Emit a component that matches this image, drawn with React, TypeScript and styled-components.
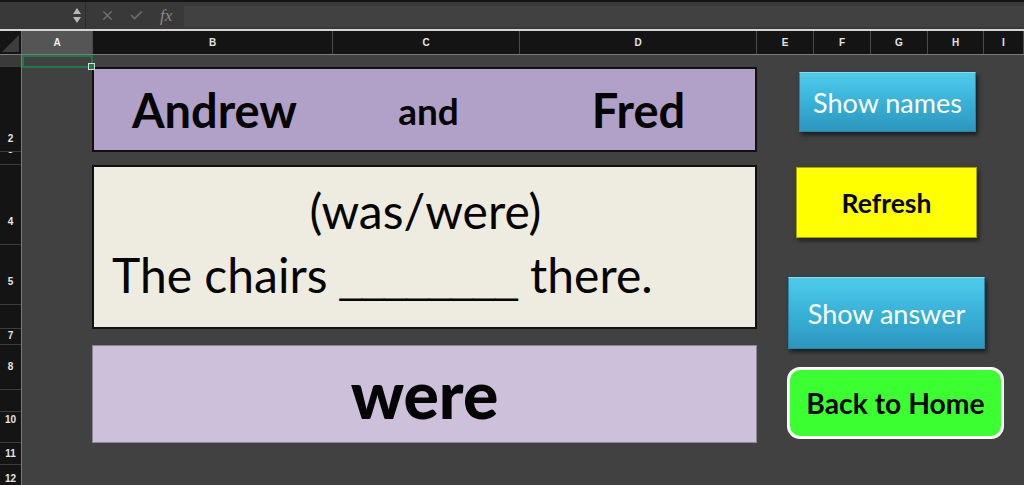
import styled, { createGlobalStyle } from 'styled-components';
import { X, Check } from 'lucide-react';

const GlobalStyle = createGlobalStyle`
  html, body {
    margin: 0;
    padding: 0;
    background: #414141;
    overflow: hidden;
  }
  * {
    box-sizing: border-box;
  }
`;

const Window = styled.div`
  width: 1024px;
  height: 485px;
  display: flex;
  flex-direction: column;
  background: #414141;
  font-family: Lato, 'Open Sans', sans-serif;
`;

// formula bar
const FormulaBar = styled.div`
  height: 31px;
  display: flex;
  align-items: stretch;
  background: #393939;
  border-top: 2px solid #151515;
  border-bottom: 2px solid #d4d4d4;
`;

const NameBox = styled.div`
  width: 86px;
  display: flex;
  align-items: center;
  justify-content: flex-end;
  padding-right: 4px;
  border-right: 1px solid #2c2c2c;
`;

const Stepper = styled.div`
  display: flex;
  flex-direction: column;
  gap: 3px;
`;

const Arrow = styled.div<{ $down?: boolean }>`
  width: 0;
  height: 0;
  border-left: 4px solid transparent;
  border-right: 4px solid transparent;
  ${p => (p.$down ? 'border-top: 6px solid #b8b8b8;' : 'border-bottom: 6px solid #b8b8b8;')}
`;

const FxIcons = styled.div`
  width: 98px;
  display: flex;
  align-items: center;
  gap: 14px;
  padding-left: 14px;
  color: #6c6c6c;
`;

const FxLabel = styled.span`
  font-family: 'Liberation Serif', serif;
  font-style: italic;
  font-size: 17px;
  color: #8a8a8a;
  margin-left: 2px;
`;

const FormulaInput = styled.div`
  flex: 1;
  margin: 4px 0 2px;
  background: #414141;
`;

// column headers
const ColumnHeaders = styled.div`
  height: 24px;
  display: flex;
  background: #141414;
  border-bottom: 1px solid #7a7a7a;
`;

const Corner = styled.div`
  width: 22px;
  border-right: 1px solid #6a6a6a;
  display: flex;
  align-items: flex-end;
  justify-content: flex-end;
  padding: 0 2px 2px 0;
`;

const HeaderCell = styled.div<{ $w?: number; $active?: boolean }>`
  ${p => (p.$w ? `width: ${p.$w}px;` : 'flex: 1;')}
  display: flex;
  align-items: center;
  justify-content: center;
  font-family: 'Liberation Sans', Arial, sans-serif;
  font-size: 10px;
  font-weight: 700;
  color: ${p => (p.$active ? '#f0f0f0' : '#e4e4e4')};
  background: ${p => (p.$active ? '#555555' : 'transparent')};
  border-right: 1px solid #4a4a4a;
`;

// body
const Body = styled.div`
  flex: 1;
  display: flex;
  min-height: 0;
`;

const RowHeaders = styled.div`
  width: 22px;
  display: flex;
  flex-direction: column;
  background: #141414;
  border-right: 1px solid #7a7a7a;
  overflow: hidden;
`;

const RowHeader = styled.div<{ $h: number; $pb: number; $active?: boolean }>`
  height: ${p => p.$h}px;
  flex-shrink: 0;
  display: flex;
  align-items: flex-end;
  justify-content: center;
  padding-bottom: ${p => p.$pb}px;
  overflow: hidden;
  font-family: 'Liberation Sans', Arial, sans-serif;
  font-size: 10px;
  font-weight: 700;
  line-height: 12px;
  color: #e4e4e4;
  background: ${p => (p.$active ? '#3a3a3a' : 'transparent')};
  border-bottom: 1px solid #3c3c3c;
`;

const Sheet = styled.div`
  flex: 1;
  position: relative;
  display: flex;
  padding-top: 12px;
  background: #414141;
`;

const SelectedCell = styled.div`
  position: absolute;
  left: 0;
  top: 0;
  width: 71px;
  height: 13px;
  border: 2px solid #1f7a4a;
  &::after {
    content: '';
    position: absolute;
    right: -4px;
    bottom: -4px;
    width: 5px;
    height: 5px;
    background: #1f7a4a;
    border: 1px solid #d9d9d9;
  }
`;

// worksheet content
const Panels = styled.div`
  width: 665px;
  margin-left: 70px;
  display: flex;
  flex-direction: column;
`;

const NamesBox = styled.div`
  height: 85px;
  display: grid;
  grid-template-columns: 241px 187px 1fr;
  align-items: center;
  background: #b1a0c7;
  border: 2px solid #111;
  font-weight: 700;
  color: #050505;
`;

const Name = styled.div<{ $size: number }>`
  text-align: center;
  font-size: ${p => p.$size}px;
  line-height: 1;
  padding-top: 2px;
`;

const SentenceBox = styled.div`
  height: 164px;
  margin-top: 13px;
  display: flex;
  flex-direction: column;
  background: #eeece1;
  border: 2px solid #111;
  color: #050505;
  font-size: 48px;
`;

const Choice = styled.div`
  text-align: center;
  line-height: 1;
  padding: 20px 0 0 2px;
`;

const Sentence = styled.div`
  line-height: 1;
  padding: 16px 0 0 18px;
  white-space: nowrap;
`;

const Blank = styled.span`
  font-family: 'Liberation Sans', Arial, sans-serif;
  font-size: 40px;
`;

const AnswerBox = styled.div`
  height: 98px;
  margin-top: 16px;
  display: flex;
  align-items: center;
  justify-content: center;
  background: #ccc0da;
  border: 1px solid #8d8599;
  font-size: 66px;
  font-weight: 900;
  color: #050505;
  padding-bottom: 2px;
`;

const Buttons = styled.div`
  margin-left: 30px;
  display: flex;
  flex-direction: column;
  align-items: flex-start;
`;

const ShapeButton = styled.div<{ $w: number; $h: number; $ml: number; $mt: number }>`
  width: ${p => p.$w}px;
  height: ${p => p.$h}px;
  margin-left: ${p => p.$ml}px;
  margin-top: ${p => p.$mt}px;
  display: flex;
  align-items: center;
  justify-content: center;
  white-space: nowrap;
`;

const BlueButton = styled(ShapeButton)`
  background: linear-gradient(180deg, #4fcbea 0%, #3ab4da 45%, #2c96bd 100%);
  border: 1px solid #2a86a8;
  border-top-color: #7fdcf3;
  box-shadow: 2px 3px 4px rgba(0, 0, 0, 0.55);
  color: #ffffff;
  font-size: 27px;
`;

const YellowButton = styled(ShapeButton)`
  background: #ffff00;
  border: 1px solid #a6a600;
  box-shadow: 2px 3px 4px rgba(0, 0, 0, 0.5);
  color: #050505;
  font-size: 26.5px;
  font-weight: 700;
`;

const GreenButton = styled(ShapeButton)`
  background: #3cff32;
  border: 3px solid #ffffff;
  border-radius: 13px;
  color: #050505;
  font-size: 28.3px;
  font-weight: 700;
`;

const columns = [
  { label: 'A', w: 71, active: true },
  { label: 'B', w: 240 },
  { label: 'C', w: 187 },
  { label: 'D', w: 237 },
  { label: 'E', w: 57 },
  { label: 'F', w: 57 },
  { label: 'G', w: 57 },
  { label: 'H', w: 56 },
  { label: 'I' },
];

const rows = [
  { label: '1', h: 12, pb: 9, active: true },
  { label: '2', h: 85, pb: 6 },
  { label: '3', h: 13, pb: 8 },
  { label: '4', h: 80, pb: 16 },
  { label: '5', h: 60, pb: 16 },
  { label: '6', h: 24, pb: 20 },
  { label: '7', h: 16, pb: 2 },
  { label: '8', h: 45, pb: 16 },
  { label: '9', h: 22, pb: 18 },
  { label: '10', h: 31, pb: 16 },
  { label: '11', h: 22, pb: 4 },
  { label: '12', h: 24, pb: 3 },
];

export default function App() {
  return (
    <Window>
      <GlobalStyle />
      <FormulaBar>
        <NameBox>
          <Stepper>
            <Arrow />
            <Arrow $down />
          </Stepper>
        </NameBox>
        <FxIcons>
          <X size={15} strokeWidth={2.5} />
          <Check size={15} strokeWidth={2.5} />
          <FxLabel>fx</FxLabel>
        </FxIcons>
        <FormulaInput />
      </FormulaBar>

      <ColumnHeaders>
        <Corner>
          <svg width="17" height="17" viewBox="0 0 17 17">
            <polygon points="17,0 17,17 0,17" fill="#3d3d3d" />
          </svg>
        </Corner>
        {columns.map(c => (
          <HeaderCell key={c.label} $w={c.w} $active={c.active}>
            {c.label}
          </HeaderCell>
        ))}
      </ColumnHeaders>

      <Body>
        <RowHeaders>
          {rows.map(r => (
            <RowHeader key={r.label} $h={r.h} $pb={r.pb} $active={r.active}>
              {r.label}
            </RowHeader>
          ))}
        </RowHeaders>

        <Sheet>
          <SelectedCell />
          <Panels>
            <NamesBox>
              <Name $size={47}>Andrew</Name>
              <Name $size={37}>and</Name>
              <Name $size={47}>Fred</Name>
            </NamesBox>
            <SentenceBox>
              <Choice>(was/were)</Choice>
              <Sentence>
                The chairs <Blank>________</Blank> there.
              </Sentence>
            </SentenceBox>
            <AnswerBox>were</AnswerBox>
          </Panels>

          <Buttons>
            <BlueButton $w={177} $h={60} $ml={12} $mt={5}>
              Show names
            </BlueButton>
            <YellowButton $w={181} $h={71} $ml={9} $mt={35}>
              Refresh
            </YellowButton>
            <BlueButton $w={197} $h={72} $ml={1} $mt={39}>
              Show answer
            </BlueButton>
            <GreenButton $w={217} $h={72} $ml={0} $mt={18}>
              Back to Home
            </GreenButton>
          </Buttons>
        </Sheet>
      </Body>
    </Window>
  );
}
